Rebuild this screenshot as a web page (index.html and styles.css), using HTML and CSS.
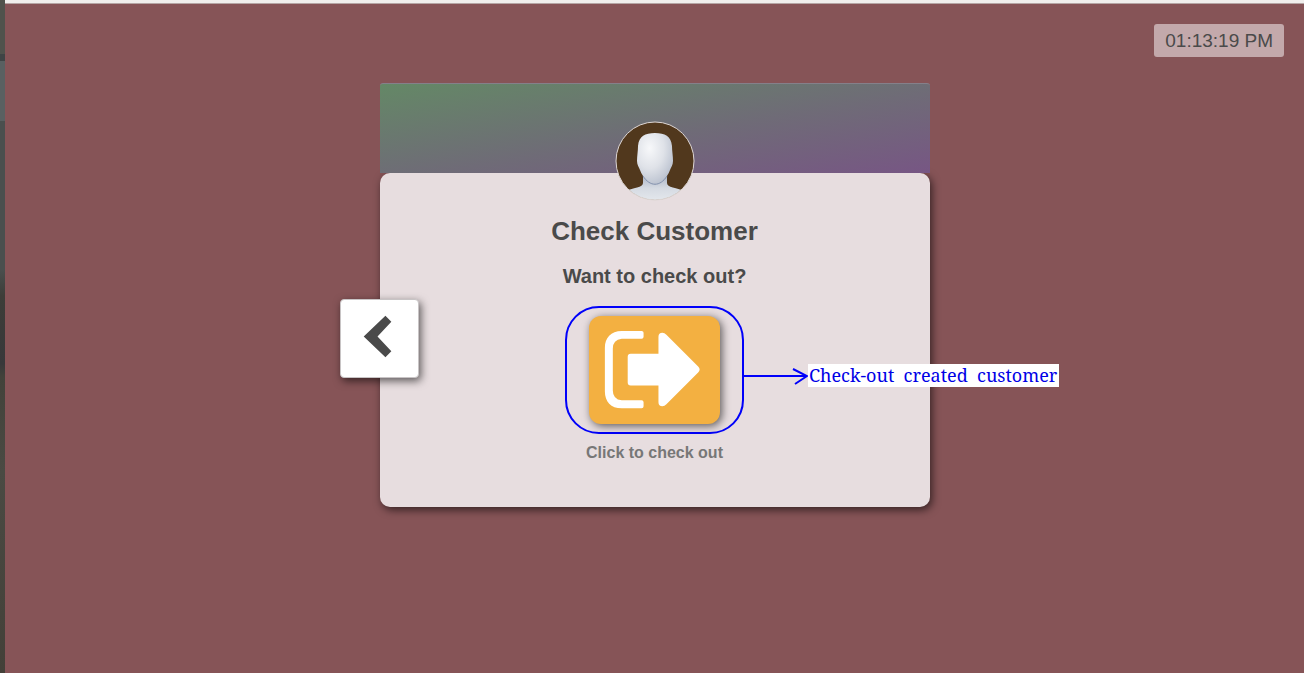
FILE: index.html
```html
<!DOCTYPE html>
<html lang="en">
  <head>
    <meta charset="UTF-8" />
    <meta name="viewport" content="width=device-width, initial-scale=1.0" />
    <title>Check Customer</title>
    <link rel="stylesheet" href="styles.css">
  </head>
  <body>
    <div class="desktop-edge"></div>

    <div class="page">
      <!-- clock -->
      <div class="topbar">
        <time class="clock">01:13:19 PM</time>
      </div>

      <!-- card -->
      <main class="card">
        <div class="card-header"></div>
        <div class="card-body">
          <svg class="avatar" viewBox="0 0 80 80" role="img" aria-label="Customer">
            <defs>
              <radialGradient id="face" cx="0.35" cy="0.3" r="0.8">
                <stop offset="0" stop-color="#f7f8fa" />
                <stop offset="0.5" stop-color="#dfe2e8" />
                <stop offset="1" stop-color="#b4bccb" />
              </radialGradient>
              <linearGradient id="neck" x1="0" y1="0" x2="0" y2="1">
                <stop offset="0" stop-color="#a9b3c5" />
                <stop offset="0.5" stop-color="#d5dae2" />
                <stop offset="1" stop-color="#e4e8ed" />
              </linearGradient>
              <clipPath id="round"><circle cx="40" cy="40" r="39" /></clipPath>
            </defs>
            <circle cx="40" cy="40" r="39" fill="#51381d" />
            <g clip-path="url(#round)">
              <path d="M28 54 V62 C28 67 19 66 8 71 V80 H72 V71 C61 66 52 67 52 62 V54 Z" fill="url(#neck)" />
              <path d="M40 12 C50 12 56 15 57 25 C57 30 58 35 58 40 C58 44 56 46 55 49 C52 57 46 63 40 63 C34 63 28 57 25 49 C24 46 22 44 22 40 C22 35 23 30 23 25 C24 15 30 12 40 12 Z" fill="url(#face)" />
              <path d="M28 55 C35 66 45 66 52 55" fill="none" stroke="#8290ac" stroke-width="1" />
            </g>
            <circle cx="40" cy="40" r="39" fill="none" stroke="#ddd6d3" stroke-width="1" />
          </svg>

          <h1>Check Customer</h1>
          <h2>Want to check out?</h2>

          <div class="highlight">
            <button class="checkout" id="checkout" type="button" aria-labelledby="checkout-label">
              <svg viewBox="0 0 132 109" aria-hidden="true">
                <path d="M53 15 Q55 15 55 17 V21 Q55 23 53 23 H33 Q24 24 24 33 V75 Q24 84 33 85 H53 Q55 85 55 87 V91 Q55 93 53 93 H33 C22 93 16 86 16 76 V32 C16 22 22 15 33 15 Z" />
                <path d="M42 38 H70 V21 Q70 17 74 17 Q76 17 78 19 L110 51 Q113 54 110 57 L78 89 Q76 91 74 91 Q70 91 70 87 V70 H42 Q39 70 39 67 V41 Q39 38 42 38 Z" />
              </svg>
            </button>
            <div class="callout">
              <svg viewBox="0 0 66 20" aria-hidden="true">
                <path d="M0 10 H65 M51 3 L65 10 L53 18" />
              </svg>
              <span>Check-out  created  customer</span>
            </div>
          </div>

          <label class="hint" id="checkout-label" for="checkout">Click to check out</label>
        </div>

        <button class="back" type="button" aria-label="Back">
          <svg viewBox="0 0 78 78" aria-hidden="true">
            <path d="M45 16 L51 22 L37 37 L51 52 L45 58 L23 37 Z" />
          </svg>
        </button>
      </main>
    </div>
  </body>
</html>
```
FILE: styles.css
```css
* {
  margin: 0;
  padding: 0;
  box-sizing: border-box;
}

body {
  display: flex;
  min-height: 100vh;
  font-family: "Liberation Sans", Arial, sans-serif;
  color: #4a4a4a;
  background-color: #865457;
}

svg {
  display: block;
}

/* strip of the desktop left of the window */
.desktop-edge {
  width: 5px;
  background: linear-gradient(#50524c 0 8%, #3f4445 8% 9%, #596061 9% 18%, #4a4f4e 18% 40%, #3d3d38 44%, #37383a 54%, #42423a 56%, #4a4a43 70%, #434038);
}

.page {
  flex: 1;
  border-top: 3px solid #f0eeec;
  box-shadow: inset 0 1px #b5a5a4;
}

/* clock */
.topbar {
  display: flex;
  justify-content: flex-end;
  padding: 21px 20px 26px;
}

.clock {
  padding: 5px 11px;
  font-size: 19px;
  line-height: 23px;
  border-radius: 3px;
  background-color: #c3a9ab;
}

/* card */
.card {
  position: relative;
  width: 100%;
  max-width: 550px;
  margin: 0 auto;
}

/* keeps the body shadow behind the header */
.card-header {
  position: relative;
  height: 90px;
  border-top: 1px solid #85808a;
  border-radius: 3px 3px 0 0;
  background: linear-gradient(to bottom right, #648866, #6f6b77 55%, #775684);
}

.card-body {
  display: flex;
  flex-direction: column;
  align-items: center;
  padding-bottom: 44px;
  border-radius: 10px;
  background-color: #e7dddf;
  box-shadow: 2px 3px 8px rgba(0, 0, 0, 0.6);
}

.avatar {
  position: relative;
  width: 80px;
  height: 80px;
  margin-top: -52px;
}

.card h1 {
  margin-top: 15px;
  font-size: 26px;
  line-height: 30px;
}

.card h2 {
  margin: 18px 0;
  font-size: 20px;
  line-height: 24px;
}

/* check out button */
.highlight {
  position: relative;
  display: flex;
  padding: 8px 22px;
  border: 2px solid #0000fa;
  border-radius: 34px;
}

.checkout {
  width: 131px;
  border: none;
  border-radius: 12px;
  background-color: #f3b041;
  box-shadow: 2px 2px 8px rgba(0, 0, 0, 0.6);
  cursor: pointer;
}

.checkout svg {
  fill: #fff;
}

.hint {
  margin-top: 9px;
  font-size: 16px;
  font-weight: bold;
  line-height: 20px;
  color: #777;
}

/* note beside the button */
.callout {
  position: absolute;
  top: 56px;
  left: 100%;
  display: flex;
  align-items: center;
}

.callout svg {
  width: 66px;
  height: 20px;
  fill: none;
  stroke: #0000fa;
  stroke-width: 2;
}

.callout span {
  padding: 0 2px 0 1px;
  font-family: "Noto Serif", "Liberation Serif", serif;
  font-size: 18px;
  line-height: 23px;
  white-space: pre;
  color: #0000e6;
  background-color: #fff;
}

/* back button */
.back {
  position: absolute;
  top: 216px;
  left: -40px;
  width: 79px;
  height: 79px;
  border: 1px solid #c8c4c5;
  border-radius: 4px;
  background-color: #fff;
  box-shadow: 2px 3px 8px rgba(0, 0, 0, 0.6);
  cursor: pointer;
}

.back svg {
  fill: #4a4a4a;
}
```
